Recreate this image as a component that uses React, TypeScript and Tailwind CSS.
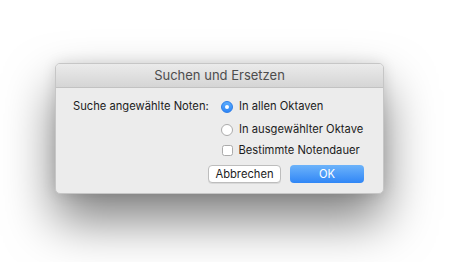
export default function App() {
  return (
    <div
      className="w-[453px] h-[262px] bg-white pl-[55px] pt-[63px] overflow-hidden whitespace-nowrap"
      style={{ fontFamily: 'Inter, "Liberation Sans", Arial, sans-serif' }}
    >
      <div className="w-[329px] h-[131px] rounded-[5px] bg-[#ececec] border border-[#c6c6c6] shadow-[0_26px_50px_rgba(0,0,0,0.5),0_0_14px_rgba(0,0,0,0.12)] flex flex-col overflow-hidden">
        {/* title bar */}
        <div className="h-[24px] shrink-0 flex items-center justify-center bg-gradient-to-b from-[#ebebeb] to-[#d5d5d5] border-b border-[#c2c2c2]">
          <span className="text-[13px] text-[#4d4d4d]">Suchen und Ersetzen</span>
        </div>

        <div className="flex flex-col pl-[17px] pr-[19px] pt-[8px] text-[11.2px] text-[#1c1c1c]">
          <div className="flex">
            <div className="w-[133px] text-right h-[21px] leading-[21px]">Suche angewählte Noten:</div>
            <div className="flex flex-col ml-[15px]">
              <div className="flex items-center h-[21px] gap-[6px]">
                <span className="w-[12px] h-[12px] rounded-full bg-gradient-to-b from-[#5aacfd] to-[#2f86f6] border border-[#2b7de9] flex items-center justify-center">
                  <span className="w-[4px] h-[4px] rounded-full bg-white" />
                </span>
                <span>In allen Oktaven</span>
              </div>
              <div className="flex items-center h-[21px] gap-[6px] mt-[2px]">
                <span className="w-[12px] h-[12px] rounded-full bg-white border border-[#ababab]" />
                <span>In ausgewählter Oktave</span>
              </div>
              <div className="flex items-center h-[21px] gap-[6px]">
                <span className="w-[11px] h-[11px] ml-[0.5px] rounded-[2.5px] bg-white border border-[#ababab]" />
                <span>Bestimmte Notendauer</span>
              </div>
            </div>
          </div>

          <div className="flex justify-end gap-[9px] mt-[4px]">
            <button className="w-[73px] h-[18px] rounded-[4px] bg-white border border-[#bdbdbd] shadow-[0_1px_0_rgba(0,0,0,0.08)] text-[11.2px] leading-[16px] text-[#1c1c1c]">
              Abbrechen
            </button>
            <button className="w-[74px] h-[18px] rounded-[4px] bg-gradient-to-b from-[#6cb3fa] to-[#2f86f6] text-[11.2px] leading-[16px] text-white">
              OK
            </button>
          </div>
        </div>
      </div>
    </div>
  );
}
